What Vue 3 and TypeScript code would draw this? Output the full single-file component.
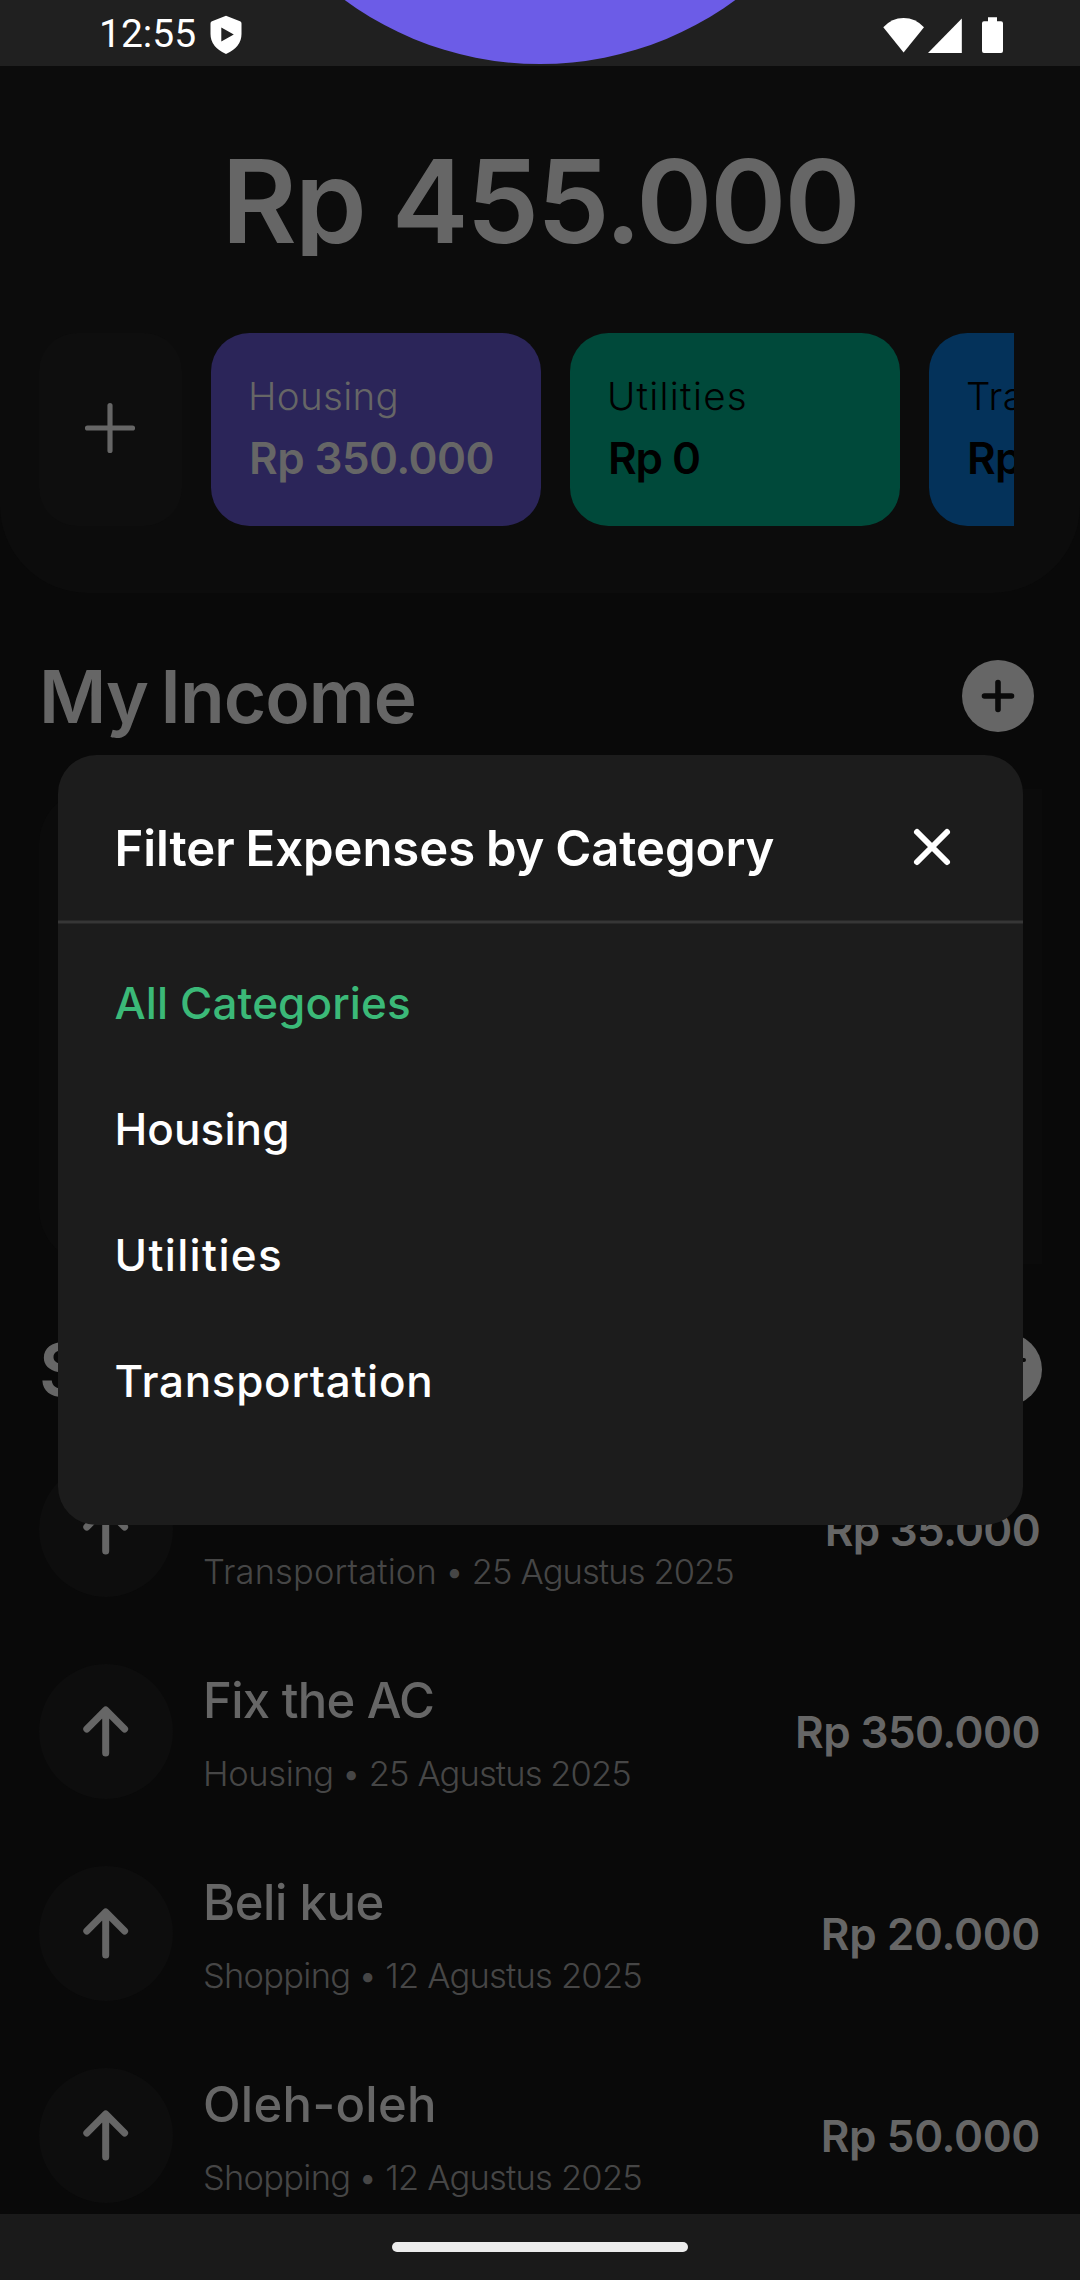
<script setup lang="ts">
interface Budget { name: string; amount: string; tone: string; nameSpacing: number; amountSpacing: number }
interface Expense {
  title: string
  category: string
  date: string
  amount: string
  titleSpacing: number
  categorySpacing: number
  dateSpacing: number
  amountSpacing: number
}
interface Category { label: string; spacing: number; active: boolean }

const budgets: Budget[] = [
  { name: 'Housing', amount: 'Rp 350.000', tone: 'violet', nameSpacing: 0.32, amountSpacing: -0.56 },
  { name: 'Utilities', amount: 'Rp 0', tone: 'green', nameSpacing: 1.27, amountSpacing: -1.08 },
  { name: 'Transportation', amount: 'Rp 35.000', tone: 'blue', nameSpacing: 0.3, amountSpacing: -0.7 },
]

const expenses: Expense[] = [
  { title: '', category: 'Transportation', date: '25 Agustus 2025', amount: 'Rp 35.000', titleSpacing: 0, categorySpacing: 0.12, dateSpacing: -0.9, amountSpacing: -0.71 },
  { title: 'Fix the AC', category: 'Housing', date: '25 Agustus 2025', amount: 'Rp 350.000', titleSpacing: -0.73, categorySpacing: -0.35, dateSpacing: -0.9, amountSpacing: -0.56 },
  { title: 'Beli kue', category: 'Shopping', date: '12 Agustus 2025', amount: 'Rp 20.000', titleSpacing: -0.43, categorySpacing: -0.75, dateSpacing: -0.8, amountSpacing: -0.35 },
  { title: 'Oleh-oleh', category: 'Shopping', date: '12 Agustus 2025', amount: 'Rp 50.000', titleSpacing: 0.31, categorySpacing: -0.75, dateSpacing: -0.8, amountSpacing: -0.37 },
]

const categories: Category[] = [
  { label: 'All Categories', spacing: 0.11, active: true },
  { label: 'Housing', spacing: 0.1, active: false },
  { label: 'Utilities', spacing: 1.35, active: false },
  { label: 'Transportation', spacing: 0.7, active: false },
]

const tracking = (n: number) => ({ letterSpacing: n + 'px' })
</script>

<template>
  <div class="screen">
    <header class="status">
      <div class="bubble"></div>
      <span class="clock">12:55</span>
      <svg class="shield" width="32" height="40" viewBox="0 0 32 40">
        <path fill="#fff" fill-rule="evenodd" d="M16 .8 30 6.2Q31.5 6.8 31.5 8.4V19Q31.5 32 16 39Q.5 32 .5 19V8.4Q.5 6.8 2 6.2ZM11.3 12.6V26.6L23.8 19.6Z" />
      </svg>
      <svg class="radio" width="124" height="40" viewBox="0 0 124 40" fill="#fff">
        <path d="M.3 11.2Q8.8 2 20.6 2T41 11.2L20.6 36.6Z" />
        <path d="M45 37 78.8 2.5V37Z" />
        <path d="M105 1.3h9v4h4q2 0 2 2V35q0 2-2 2h-17q-2 0-2-2V7.3q0-2 2-2h4z" />
      </svg>
    </header>

    <main class="content">
      <section class="summary">
        <h1 class="total">Rp 455.000</h1>
        <div class="cards">
          <button class="add-card" type="button">
            <svg width="80" height="80" viewBox="0 0 512 512" fill="none" stroke="#666" stroke-width="33" stroke-linecap="round">
              <path d="M256 112v288M400 256H112" />
            </svg>
          </button>
          <article v-for="b in budgets" :key="b.name" class="card" :class="b.tone">
            <div class="card-name" :style="tracking(b.nameSpacing)">{{ b.name }}</div>
            <div class="card-amount" :style="tracking(b.amountSpacing)">{{ b.amount }}</div>
          </article>
        </div>
      </section>

      <div class="heading income">
        <h2>My Income</h2>
        <svg width="72" height="72" viewBox="0 0 72 72">
          <circle cx="36" cy="36" r="36" fill="#666" />
          <path d="M36 22.5v27M22.5 36h27" stroke="#0a0a0a" stroke-width="5.6" stroke-linecap="round" />
        </svg>
      </div>
      <div class="income-card"></div>

      <div class="heading spending">
        <h2>Spending</h2>
        <svg width="73" height="73" viewBox="0 0 73 73">
          <circle cx="36.5" cy="36.5" r="36.5" fill="#666" />
          <path d="M18 27h37M24 37h25M31 47h11" stroke="#0a0a0a" stroke-width="4" stroke-linecap="round" />
        </svg>
      </div>

      <ul class="expenses">
        <li v-for="(e, i) in expenses" :key="i" class="expense">
          <div class="badge">
            <svg width="60" height="60" viewBox="0 0 60 60" fill="none" stroke="#666" stroke-width="7" stroke-linecap="round" stroke-linejoin="round">
              <path d="M10.8 27 29.700 8 48.600 27M29.700 8.500V51" />
            </svg>
          </div>
          <div class="info">
            <div class="title" :style="tracking(e.titleSpacing)">{{ e.title }}</div>
            <div class="meta">
              <span :style="tracking(e.categorySpacing)">{{ e.category }}</span>
              <span class="dot">•</span>
              <span :style="tracking(e.dateSpacing)">{{ e.date }}</span>
            </div>
          </div>
          <div class="amount" :style="tracking(e.amountSpacing)">{{ e.amount }}</div>
        </li>
      </ul>
    </main>

    <footer class="nav"><div class="pill"></div></footer>

    <div class="overlay">
      <div class="modal">
        <div class="modal-head">
          <span class="modal-title">Filter Expenses by Category</span>
          <svg width="40" height="40" viewBox="0 0 40 40" fill="none" stroke="#fff" stroke-width="6" stroke-linecap="round">
            <path d="M5 5 35 35M35 5 5 35" />
          </svg>
        </div>
        <div class="rule"></div>
        <ul class="options">
          <li v-for="c in categories" :key="c.label" :class="{ active: c.active }" :style="tracking(c.spacing)">{{ c.label }}</li>
        </ul>
      </div>
    </div>
  </div>
</template>

<style>
body {
  margin: 0;
  background: #090909;
}
</style>

<style scoped>
.screen {
  position: relative;
  width: 1080px;
  height: 2280px;
  overflow: hidden;
  display: flex;
  flex-direction: column;
  background: #090909;
  color: #666;
  font-family: Inter, "Liberation Sans", sans-serif;
  white-space: nowrap;
}
h1, h2, ul { margin: 0; padding: 0; list-style: none; }
svg { display: block; flex: none; }

.status {
  position: relative;
  flex: none;
  height: 66px;
  box-sizing: border-box;
  padding: 0 73px 0 99px;
  display: flex;
  align-items: center;
  overflow: hidden;
  background: #202020;
  color: #fff;
}
.bubble {
  position: absolute;
  left: 210px;
  top: -596px;
  width: 660px;
  height: 660px;
  border-radius: 50%;
  background: #6c5ce7;
}
.clock { font: 400 39px/66px Roboto, sans-serif; width: 111px; padding-top: 2px; }
.shield { margin-top: 4px; }
.radio { margin-left: auto; margin-top: 5px; }

.content { height: 2148px; overflow: hidden; }
.summary {
  height: 527px;
  box-sizing: border-box;
  padding: 80px 66px 0 39px;
  background: #0c0c0c;
  border-radius: 0 0 88px 88px;
}
.total {
  height: 110px;
  line-height: 110px;
  overflow: hidden;
  margin-right: -27px;
  text-align: center;
  font-size: 115.5px;
  font-weight: 600;
  letter-spacing: -2.1px;
}
.cards { display: flex; gap: 29px; margin-top: 77px; overflow: hidden; }
.add-card {
  flex: none;
  width: 143px;
  height: 193px;
  padding: 0 1px 3px 0;
  border: 0;
  border-radius: 38px;
  background: #0e0e0e;
  display: flex;
  align-items: center;
  justify-content: center;
}
.card {
  flex: none;
  width: 330px;
  height: 193px;
  box-sizing: border-box;
  padding: 38px 0 0 37px;
  border-radius: 38.5px;
  color: #000;
}
.violet { background: #2b2559; color: #666; }
.green { background: #00493a; }
.blue { background: #04325a; }
.card-name { font-size: 38.5px; line-height: 50px; font-weight: 300; }
.card-amount { margin: 11px 0 0 1px; font-size: 44px; line-height: 53px; font-weight: 600; }

.heading {
  height: 88px;
  display: flex;
  align-items: center;
  justify-content: space-between;
  padding-left: 39px;
}
.heading h2 {
  padding-top: 2px;
  font-size: 73px;
  line-height: 88px;
  font-weight: 600;
  letter-spacing: -0.9px;
  word-spacing: -5px;
}
.income { margin-top: 59px; padding-right: 46px; }
.income-card { margin: 49px 38px 0 39px; height: 475px; background: #0b0b0b; border-radius: 55px 0 0 55px; }
.spending { margin-top: 61px; padding-right: 38px; }

.expenses { margin-top: 49px; display: flex; flex-direction: column; gap: 67px; }
.expense { height: 135px; display: flex; padding: 0 39px; }
.badge {
  flex: none;
  width: 134px;
  height: 135px;
  border-radius: 50%;
  background: #0d0d0d;
  display: flex;
  align-items: center;
  justify-content: center;
}
.info { margin-left: 30px; padding-top: 7px; flex: 1; }
.title { height: 60px; font-size: 49px; line-height: 60px; font-weight: 500; }
.meta { display: flex; margin-top: 20px; font-size: 34.5px; line-height: 45px; font-weight: 300; color: #464646; }
.dot { width: 35px; display: flex; justify-content: center; }
.amount { padding-right: 1px; font-size: 44px; line-height: 136px; font-weight: 600; }

.nav {
  flex: none;
  height: 66px;
  background: #1a1a1a;
  display: flex;
  align-items: center;
  justify-content: center;
}
.pill { width: 296px; height: 10px; border-radius: 5px; background: #ececec; }

.overlay {
  position: absolute;
  inset: 0;
  display: flex;
  align-items: center;
  justify-content: center;
}
.modal { width: 965px; height: 770px; border-radius: 38.5px; background: #1c1c1c; color: #fff; }
.modal-head {
  height: 165px;
  box-sizing: border-box;
  padding: 22px 71px 0 57px;
  display: flex;
  align-items: center;
  justify-content: space-between;
}
.modal-title { font-size: 49px; line-height: 70px; font-weight: 600; letter-spacing: -0.05px; word-spacing: -1.4px; }
.modal-head svg { margin-top: -3px; }
.rule { height: 4px; background: linear-gradient(#282828 1px, #363636 1px 3px, #282828 3px); }
.options { padding: 16px 57px 0; }
.options li { height: 126px; line-height: 126px; font-size: 44px; font-weight: 500; }
.options .active { color: #3bb978; }
</style>
